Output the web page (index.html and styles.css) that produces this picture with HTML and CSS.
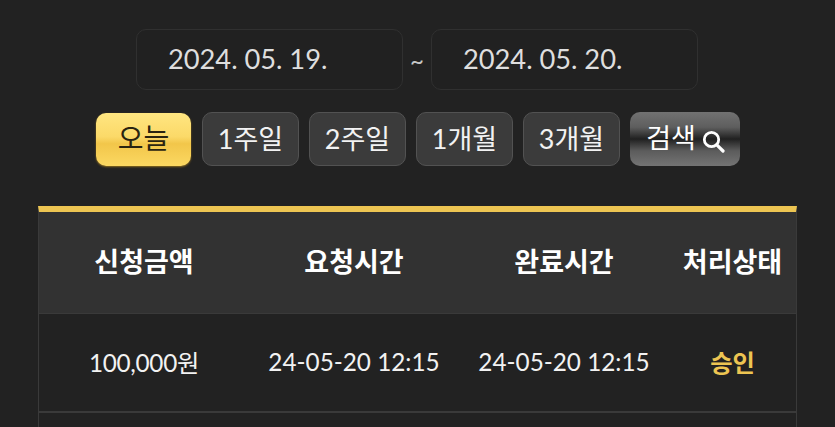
FILE: index.html
```html
<!DOCTYPE html>
<html lang="ko">
<head>
<meta charset="utf-8">
<title>신청내역</title>
<link rel="stylesheet" href="styles.css">
</head>
<body>
<main class="page">
  <div class="dates">
    <div class="date">2024. 05. 19.</div>
    <span class="tilde">~</span>
    <div class="date">2024. 05. 20.</div>
  </div>
  <div class="filters">
    <button class="btn btn-today">오늘</button>
    <button class="btn">1주일</button>
    <button class="btn">2주일</button>
    <button class="btn">1개월</button>
    <button class="btn">3개월</button>
    <button class="btn btn-search">검색<svg class="search-icon" viewBox="0 0 24 24" width="24" height="24" aria-hidden="true"><circle cx="10.5" cy="10.5" r="7.2" fill="none" stroke="#fff" stroke-width="2.8"/><path d="M15.8 15.8L22 22" fill="none" stroke="#fff" stroke-width="3.2" stroke-linecap="round"/></svg></button>
  </div>
  <div class="list-wrap">
    <table class="list">
      <thead>
        <tr>
          <th class="c1">신청금액</th>
          <th class="c2">요청시간</th>
          <th class="c3">완료시간</th>
          <th class="c4">처리상태</th>
        </tr>
      </thead>
      <tbody>
        <tr>
          <td class="amount">100,000원</td>
          <td>24-05-20 12:15</td>
          <td>24-05-20 12:15</td>
          <td class="ok">승인</td>
        </tr>
      </tbody>
    </table>
  </div>
</main>
</body>
</html>
```
FILE: styles.css
```css
* { box-sizing: border-box; }
html, body { margin: 0; height: 100%; overflow: hidden; }
body {
  background: #222222;
  color: #fff;
  font-family: Lato, "Noto Sans CJK KR", sans-serif;
}
.page {
  display: flex;
  flex-direction: column;
  height: 100%;
  padding: 29px 38px 0;
}
.dates {
  display: flex;
  justify-content: center;
  align-items: center;
  margin-left: -1px;
}
.date {
  width: 267px;
  height: 61px;
  padding-left: 31px;
  border: 1px solid #303030;
  border-radius: 10px;
  background: #212121;
  color: #dedede;
  font-size: 27.3px;
  letter-spacing: -0.05px;
  line-height: 57px;
}
.tilde {
  width: 28px;
  text-align: center;
  color: #c8c8c8;
  font-size: 24px;
}
.filters {
  display: flex;
  justify-content: center;
  gap: 10px;
  margin: 22px 0 40px;
  padding-left: 1px;
}
.btn {
  width: 97px;
  height: 54px;
  padding: 0 0 2px;
  border: 1px solid #525252;
  border-radius: 10px;
  background: #3b3b3b;
  color: #f2f2f2;
  font: 27px/1 Lato, "Noto Sans CJK KR", sans-serif;
}
.btn-today {
  width: 95px;
  height: 53px;
  margin: 1px 1px 0 0;
  padding-bottom: 4px;
  border: 0;
  color: #2a2410;
  font-size: 28px;
  background: linear-gradient(#ffe681 0%, #fbd968 45%, #f2c64a 58%, #fbd862 100%);
  box-shadow: 0 1px 2px #8a6a1c;
}
.btn-search {
  width: 110px;
  display: flex;
  align-items: center;
  justify-content: center;
  gap: 5px;
  padding: 0 0 3px 1px;
  border: 0;
  color: #fff;
  background: linear-gradient(#727272 0%, #5e5e5e 28%, #202020 50%, #5c5c5c 72%, #747474 100%);
}
.search-icon { margin-top: 6px; }
.list-wrap {
  flex: 1;
  min-height: 0;
  width: 759px;
  border-top: 6px solid #edc552;
  border-left: 1px solid #3a3a3a;
  border-right: 1px solid #3a3a3a;
}
.list {
  width: 100%;
  table-layout: fixed;
  border-collapse: separate;
  border-spacing: 0;
}
.c1, .c2, .c3 { width: 210px; }
.c4 { width: auto; }
th {
  height: 102px;
  padding: 0 0 5px;
  background: #323232;
  border-bottom: 1px solid #3a3a3a;
  color: #fff;
  font-size: 27px;
  font-weight: 700;
}
td {
  height: 99px;
  padding: 0 0 2px;
  text-align: center;
  background: #222;
  border-bottom: 2px solid #3a3a3a;
  color: #f2f2f2;
  font-size: 24.3px;
}
td.amount { letter-spacing: -0.3px; }
td.ok { color: #edc552; font-weight: 700; }
```
